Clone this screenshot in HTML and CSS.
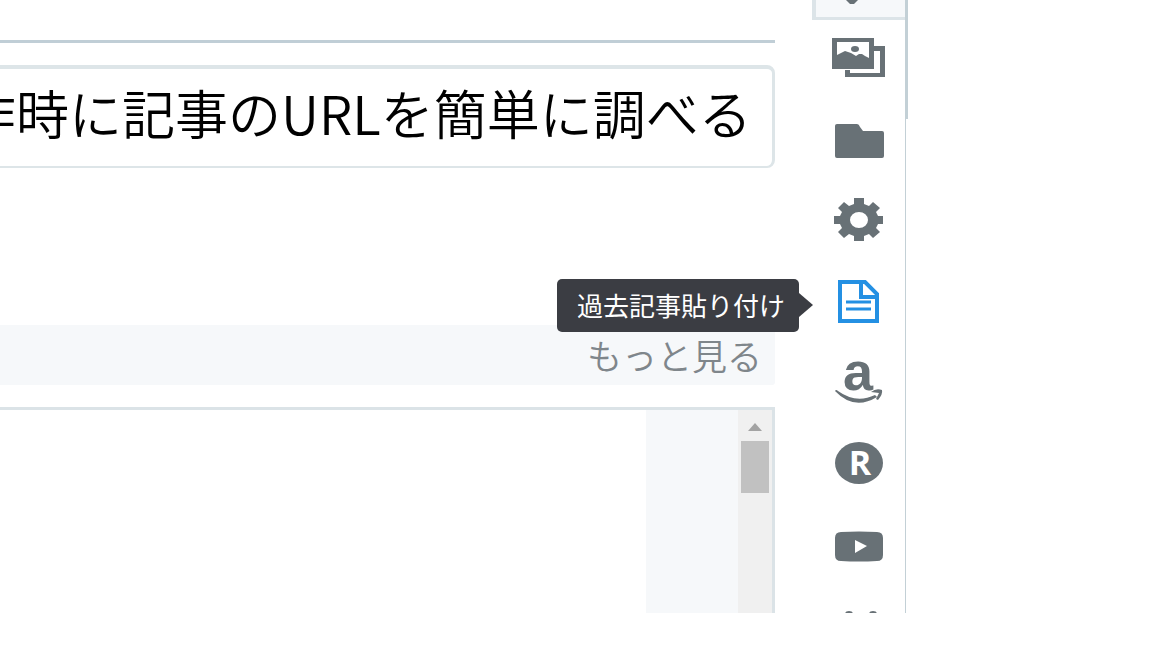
FILE: index.html
```html
<!DOCTYPE html>
<html lang="ja">
<head>
<meta charset="utf-8">
<title>記事を書く</title>
<link rel="stylesheet" href="styles.css">
</head>
<body>
<div class="app">
  <main class="main">
    <div class="toolbar"></div>
    <input class="title" type="text" aria-label="タイトル" value="作時に記事のURLを簡単に調べる方">
    <div class="more"><button class="more-button" type="button">もっと見る</button></div>
    <section class="editor" aria-label="本文">
      <div class="paper"></div>
      <div class="gutter"></div>
      <div class="scrollbar">
        <svg class="scroll-arrow" viewBox="0 0 14 8"><path d="M7 0L14 8H0z"/></svg>
        <div class="thumb"></div>
      </div>
    </section>
  </main>
  <aside class="side">
    <nav class="tools">
      <button class="tab" type="button" aria-label="編集"><svg class="tab-icon" viewBox="0 0 14 4"><path d="M1 0H13L9 4H5z"/></svg></button>
      <button class="tool" type="button" aria-label="写真">
        <svg class="icon" viewBox="0 0 56 61"><path fill-rule="evenodd" d="M1 8H43V39H1zM6 12V25L10 23L14 21L20 23L25 26L28 24L31 24L34 26L38 28V12z"/><ellipse cx="24" cy="19" rx="4" ry="3"/><path d="M43 16H54V47H14V40H19V43H49V21H43z"/></svg>
      </button>
      <button class="tool" type="button" aria-label="カテゴリー">
        <svg class="icon" viewBox="0 0 56 61"><path d="M6 13H26Q28 13 29 16L32 20H51Q53 20 53 22V45Q53 47 51 47H6Q4 47 4 45V15Q4 13 6 13z"/></svg>
      </button>
      <button class="tool" type="button" aria-label="設定">
        <svg class="icon" viewBox="0 0 56 61"><path fill-rule="evenodd" d="M23 6H33V12L38 14L42 10L49 16L45 20L47 24H52V32H47L45 36L49 40L42 46L38 42L33 44V49H23V44L18 42L13 46L7 40L11 36L9 32H3V24H9L11 20L7 16L13 10L18 14L23 12zM28 20A9 8 0 1 0 28 36A9 8 0 1 0 28 20z"/></svg>
      </button>
      <button class="tool active" type="button" aria-label="過去記事貼り付け">
        <svg class="icon" viewBox="0 0 56 61"><path class="line" d="M9 9H34L46 21V48H9zM30 9V24H46"/><path class="thin" d="M15 29H40M15 36H40"/></svg>
        <span class="tooltip" role="tooltip">過去記事貼り付け<svg class="tip-arrow" viewBox="0 0 14 24"><path d="M0 0L14 12L0 24z"/></svg></span>
      </button>
      <button class="tool" type="button" aria-label="Amazon商品紹介">
        <svg class="icon" viewBox="0 0 56 61"><text class="letter-a" x="27" y="36">a</text><path d="M4 37Q5 35 7 37Q25 50 44 41L46 43Q23 57 4 37zM40 38Q45 34 51 36Q52 40 47 46L45 45L48 39z"/></svg>
      </button>
      <button class="tool" type="button" aria-label="楽天商品紹介">
        <svg class="icon" viewBox="0 0 56 61"><ellipse cx="28" cy="28" rx="24" ry="21"/><text class="letter-r" x="29" y="40">R</text></svg>
      </button>
      <button class="tool" type="button" aria-label="YouTube貼り付け">
        <svg class="icon" viewBox="0 0 56 61"><path fill-rule="evenodd" d="M10 16Q28 15 46 16Q52 16 52 22V39Q52 45 46 45Q28 46 10 45Q4 45 4 39V22Q4 16 10 16zM24 24V37L36 30z"/></svg>
      </button>
      <button class="tool" type="button" aria-label="その他">
        <svg class="icon" viewBox="0 0 56 61"><ellipse cx="18" cy="17" rx="4" ry="3"/><ellipse cx="42" cy="17" rx="4" ry="3"/></svg>
      </button>
    </nav>
    <div class="side-track"><div class="side-thumb"></div></div>
  </aside>
</div>
</body>
</html>
```
FILE: styles.css
```css
* { box-sizing: border-box; }
body {
  margin: 0;
  background: #fff;
  font-family: "Noto Sans CJK JP", sans-serif;
  overflow: hidden;
}
button {
  margin: 0;
  padding: 0;
  border: 0;
  background: none;
  font-family: inherit;
}
.app {
  display: grid;
  grid-template-columns: minmax(0, 1fr) 96px;
  column-gap: 37px;
  height: calc(100vh - 35px);
  margin-right: 244px;
  overflow: hidden;
}
.main {
  display: flex;
  flex-direction: column;
  min-width: 0;
}
.toolbar {
  flex: none;
  height: 43px;
  border-bottom: 3px solid #c0ced6;
}
.title {
  flex: none;
  height: 103px;
  margin: 22px 0 0 -60px;
  padding: 0 19px 12px 20px;
  border: 3px solid #dde5e8;
  border-top-width: 4px;
  border-bottom-width: 2px;
  border-radius: 8px;
  outline: 0;
  background: #fff;
  color: #000;
  font-family: inherit;
  font-size: 53px;
  font-weight: 350;
}
.more {
  display: flex;
  flex: none;
  justify-content: flex-end;
  align-items: center;
  height: 60px;
  margin-top: 157px;
  padding: 0 13px 0 0;
  border-radius: 0 0 3px 0;
  background: #f6f8fa;
}
.more-button {
  color: #7f868b;
  font-size: 35px;
  font-weight: 350;
  line-height: 52px;
}
.editor {
  display: grid;
  grid-template-columns: 1fr 92px 34px;
  flex: 1;
  margin-top: 22px;
  border-top: 3px solid #dbe3e7;
  border-right: 3px solid #dbe3e7;
}
.gutter { background: #f6f8fa; }
.scrollbar {
  display: flex;
  flex-direction: column;
  align-items: center;
  gap: 10px;
  padding-top: 13px;
  background: #f0f0f0;
}
.scroll-arrow {
  width: 14px;
  height: 8px;
  fill: #a3a3a3;
}
.thumb {
  width: 28px;
  height: 52px;
  background: #c1c1c1;
}
.side {
  display: grid;
  grid-template-columns: 1fr 3px;
  min-height: 0;
}
.tools {
  display: flex;
  flex-direction: column;
  min-height: 0;
}
.tab {
  display: flex;
  flex: none;
  justify-content: center;
  height: 20px;
  border-left: 4px solid #dce4e8;
  border-bottom: 3px solid #dce4e8;
  background: #f6f8fa;
}
.tab-icon {
  width: 14px;
  height: 4px;
  margin-right: 18px;
  fill: #687176;
}
.tool {
  display: flex;
  position: relative;
  flex: none;
  justify-content: center;
  align-items: center;
  height: 81px;
  color: #687176;
}
.active { color: #2490e3; }
.icon {
  width: 56px;
  height: 61px;
  fill: currentColor;
  overflow: visible;
}
.line, .thin {
  fill: none;
  stroke: currentColor;
  stroke-width: 4px;
}
.thin { stroke-width: 3px; }
.letter-a, .letter-r {
  font-weight: 700;
  text-anchor: middle;
}
.letter-a {
  font-family: "Liberation Sans", sans-serif;
  font-size: 54px;
}
.letter-r {
  fill: #fff;
  font-family: "Open Sans", sans-serif;
  font-size: 34px;
}
.tooltip {
  position: absolute;
  right: calc(100% + 13px);
  top: 16px;
  padding: 8px 14px 9px 20px;
  border-radius: 5px;
  background: #3b3d43;
  color: #fff;
  font-size: 26px;
  line-height: 36px;
  white-space: nowrap;
}
.tip-arrow {
  position: absolute;
  left: 100%;
  top: 14px;
  width: 14px;
  height: 24px;
  fill: #3b3d43;
}
.side-track { border-left: 1px solid #c3d0d6; }
.side-thumb {
  height: 119px;
  background: #c3d0d6;
}
```
